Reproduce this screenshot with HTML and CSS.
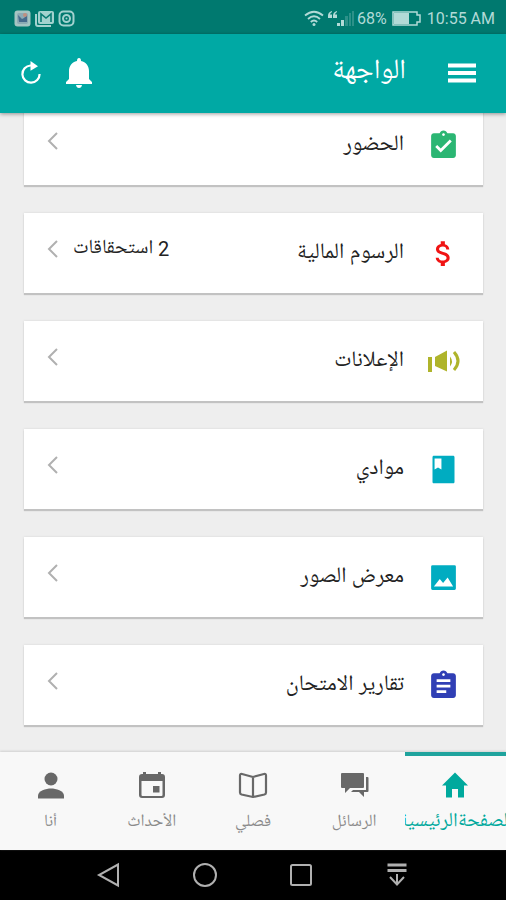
FILE: index.html
```html
<!DOCTYPE html>
<html lang="ar" dir="rtl">
<head>
<meta charset="utf-8">
<meta name="viewport" content="width=device-width, initial-scale=1">
<title>الواجهة</title>
<link rel="stylesheet" href="styles.css">
</head>
<body>
<div class="status" dir="ltr">
  <div class="status-group notifications">
    <svg width="17" height="17" viewBox="0 0 17 17"><rect x="0.5" y="0.5" width="16" height="16" rx="3" fill="#a5c5c3"/><rect x="3" y="3" width="11" height="11" rx="2" fill="#8cabb5"/><path d="M4 5l4 4 2-1 3-3v7H5z" fill="#466b8c"/><circle cx="11" cy="5" r="2" fill="#c08f80"/></svg>
    <svg width="19" height="17" viewBox="0 0 19 17"><path d="M1 4v10q0 2 2 2h13" fill="none" stroke="#a2d2cf" stroke-width="2"/><rect x="3" y="1" width="16" height="13" rx="2" fill="#a2d2cf"/><path d="M6 12V4l5 4 5-4v8" fill="none" stroke="#087b73" stroke-width="1.6"/></svg>
    <svg width="17" height="17" viewBox="0 0 17 17" fill="none" stroke="#a2d2cf" stroke-width="2"><rect x="1.5" y="1.5" width="14" height="14" rx="4"/><circle cx="8.500" cy="8.500" r="3.500"/><circle cx="8.500" cy="8.500" r="1" fill="#a2d2cf" stroke="none"/></svg>
  </div>
  <div class="status-group">
    <svg width="20" height="17" viewBox="0 0 20 17" fill="none" stroke="#b2dad7" stroke-width="1.800"><path d="M1 5.500Q10-2 19 5.500M4 9Q10 3.500 16 9M6.800 12Q10 9 13.200 12"/><circle cx="10" cy="14.500" r="1.500" fill="#b2dad7" stroke="none"/></svg>
    <svg class="signal" width="27" height="17" viewBox="0 0 27 17" fill="#b2dad7"><path d="M4 1Q0 2 0 5.500V8h4V4.500H2Q2 3 4 2zM9 1Q5 2 5 5.500V8h4V4.500H7Q7 3 9 2z"/><path d="M9 13h3v3H9zM13 10h3v6h-3z"/><path opacity=".25" d="M17 6h3v10h-3zM21 3h2v13h-2zM24 1h2v15h-2z"/></svg>
    <span>68%</span>
    <svg class="battery" width="30" height="15" viewBox="0 0 30 15"><path d="M1 1h24v3h3v7h-3v3H1z" fill="none" stroke="#b2dad7" stroke-width="1.500"/><path d="M2 2h15v11H2z" fill="#b2dad7"/></svg>
    <span>10:55 AM</span>
  </div>
</div>

<header class="appbar">
  <button class="icon-button" aria-label="القائمة"><svg width="28" height="20" viewBox="0 0 28 20" stroke="#fff" stroke-width="4"><path d="M0 2.500h28M0 10h28M0 17.500h28"/></svg></button>
  <h1>الواجهة</h1>
  <button class="icon-button" aria-label="التنبيهات"><svg width="26" height="32" viewBox="0 0 26 32" fill="#fff"><path d="M13 1q2 0 2 3c5 1 8 5 8 10v8l3 3v2H0v-2l3-3v-8C3 9 6 5 11 4q0-3 2-3zM10 28h6q-.5 3-3 3t-3-3z"/></svg></button>
  <button class="icon-button" aria-label="تحديث"><svg width="22" height="24" viewBox="0 0 22 24"><path d="M12.500 4.500H10.500A8.600 8.600 0 1 0 19.600 13" fill="none" stroke="#fff" stroke-width="2.200"/><path d="M10.500 0l7.500 5.200-7.500 4.500z" fill="#fff"/></svg></button>
</header>

<main>
  <nav class="cards" aria-label="الأقسام">
    <a class="card" href="#attendance">
      <svg class="card-icon" viewBox="0 0 24 24"><path fill="#2bb673" d="M19 3h-4.180C14.400 1.840 13.300 1 12 1s-2.400.84-2.820 2H5c-1.100 0-2 .9-2 2v14c0 1.100.9 2 2 2h14c1.100 0 2-.9 2-2V5c0-1.100-.9-2-2-2zm-7 0c.55 0 1 .45 1 1s-.45 1-1 1-1-.45-1-1 .45-1 1-1zm-2 14l-4-4 1.410-1.410L10 14.170l6.590-6.590L18 9l-8 8z"/></svg>
      <span class="title">الحضور</span>
      <span class="more"><svg class="chevron" viewBox="0 0 12 18"><path d="M10 1L2 9l8 8"/></svg></span>
    </a>
    <a class="card" href="#fees">
      <svg class="card-icon" viewBox="0 0 24 24"><path fill="#f01414" d="M11.800 10.900c-2.270-.59-3-1.200-3-2.150 0-1.090 1.010-1.850 2.700-1.850 1.780 0 2.440.85 2.500 2.100h2.210c-.07-1.720-1.120-3.300-3.210-3.810V3h-3v2.160c-1.940.42-3.500 1.680-3.500 3.610 0 2.310 1.910 3.460 4.700 4.130 2.500.6 3 1.480 3 2.410 0 .69-.49 1.790-2.700 1.790-2.060 0-2.870-.92-2.980-2.100h-2.200c.12 2.190 1.760 3.420 3.680 3.830V21h3v-2.150c1.950-.37 3.500-1.500 3.500-3.550 0-2.840-2.430-3.810-4.700-4.400z"/></svg>
      <span class="title">الرسوم المالية</span>
      <span class="more"><span class="note">2 استحقاقات</span><svg class="chevron" viewBox="0 0 12 18"><path d="M10 1L2 9l8 8"/></svg></span>
    </a>
    <a class="card" href="#announcements">
      <svg class="card-icon" viewBox="0 0 33 33" fill="#afb42b"><path d="M1 12h4v15H1zM8 12l12-6.500v21L8 21zM23 11.500q4 5 0 10z"/><path d="M27 7q8 9 0 18" fill="none" stroke="#afb42b" stroke-width="3"/></svg>
      <span class="title">الإعلانات</span>
      <span class="more"><svg class="chevron" viewBox="0 0 12 18"><path d="M10 1L2 9l8 8"/></svg></span>
    </a>
    <a class="card" href="#subjects">
      <svg class="card-icon" viewBox="0 0 24 24"><path fill="#00acc1" d="M19 2H5c-.6 0-1 .4-1 1v18c0 .6.400 1 1 1h14c.6 0 1-.4 1-1V3c0-.6-.4-1-1-1zM5.500 4h5v8L8 10.500 5.500 12z"/></svg>
      <span class="title">موادي</span>
      <span class="more"><svg class="chevron" viewBox="0 0 12 18"><path d="M10 1L2 9l8 8"/></svg></span>
    </a>
    <a class="card" href="#gallery">
      <svg class="card-icon" viewBox="0 0 24 24"><path fill="#00acc1" d="M4 3h16q1 0 1 1v16q0 1-1 1H4q-1 0-1-1V4q0-1 1-1zm1 15.500h14L15 12l-3.300 4-2.400-3z"/></svg>
      <span class="title">معرض الصور</span>
      <span class="more"><svg class="chevron" viewBox="0 0 12 18"><path d="M10 1L2 9l8 8"/></svg></span>
    </a>
    <a class="card" href="#reports">
      <svg class="card-icon" viewBox="0 0 24 24"><path fill="#303fb5" d="M19 3h-4.180C14.400 1.840 13.300 1 12 1s-2.400.84-2.820 2H5c-1.100 0-2 .9-2 2v14c0 1.100.9 2 2 2h14c1.100 0 2-.9 2-2V5c0-1.100-.9-2-2-2zm-7 0c.55 0 1 .45 1 1s-.45 1-1 1-1-.45-1-1 .45-1 1-1zm2 14.500H7v-2h7v2zm3-4H7v-2h10v2zm0-4H7v-2h10v2z"/></svg>
      <span class="title">تقارير الامتحان</span>
      <span class="more"><svg class="chevron" viewBox="0 0 12 18"><path d="M10 1L2 9l8 8"/></svg></span>
    </a>
  </nav>
</main>

<nav class="tabs" aria-label="التنقل">
  <a class="tab active" href="#home"><svg viewBox="0 0 34 34"><path fill="#00a99d" d="M17 4.500L4 17.500h4V29.500h6V21h6v8.500h6V17.500h4z"/></svg><span>الصفحةالرئيسية</span></a>
  <a class="tab" href="#messages"><svg viewBox="0 0 34 34" fill="#686868"><path d="M4 6q0-1 1-1h21q1 0 1 1v13q0 1-1 1H13l-5 5v-5H5q-1 0-1-1z"/><path d="M29 9h1.500q1 0 1 1v13q0 1-1 1H27v5l-5-5h-8l2-2h13z"/></svg><span>الرسائل</span></a>
  <a class="tab" href="#class"><svg viewBox="0 0 34 34" fill="none" stroke="#686868" stroke-width="2.200" stroke-linejoin="round"><path d="M17 9L28 6q2-.5 2 1.500v17q0 1.500-1.500 2L17 29 5.500 26.500Q4 26 4 24.500v-17Q4 5.500 6 6zM17 9V29"/></svg><span>فصلي</span></a>
  <a class="tab" href="#events"><svg viewBox="0 0 34 34" fill="#686868"><path fill-rule="evenodd" d="M8 4h3v2h12V4h3v2h1q3 0 3 3v18q0 3-3 3H7q-3 0-3-3V9q0-3 3-3h1zM6.500 13v14q0 1 1 1h19q1 0 1-1V13z"/><path d="M18 18h6.500v6.500H18z"/></svg><span>الأحداث</span></a>
  <a class="tab" href="#me"><svg viewBox="0 0 34 34" fill="#686868"><circle cx="17" cy="11" r="6.500"/><path d="M4 30.500v-3c0-4.500 8-7 13-7s13 2.500 13 7v3z"/></svg><span>أنا</span></a>
</nav>

<div class="system" dir="ltr">
  <button aria-label="رجوع"><svg viewBox="0 0 26 26"><path d="M22 2.500v21L3 13z"/></svg></button>
  <button aria-label="الشاشة الرئيسية"><svg viewBox="0 0 26 26"><circle cx="13" cy="13" r="11"/></svg></button>
  <button aria-label="التطبيقات الأخيرة"><svg viewBox="0 0 26 26"><rect x="3" y="3" width="20" height="20" rx="1.500"/></svg></button>
  <button aria-label="إخفاء الشريط"><svg viewBox="0 0 26 26"><path stroke-width="3" d="M3.500 3h19M3.500 8.500h19"/><path d="M13 12v10M6 15l7 7.500 7-7.500"/></svg></button>
</div>
</body>
</html>
```
FILE: styles.css
```css
* {
  box-sizing: border-box;
}

body {
  margin: 0;
  height: 100vh;
  display: flex;
  flex-direction: column;
  overflow: hidden;
  background: #eeeeee;
  color: #222;
  font-family: Roboto, "Noto Naskh Arabic UI", "Noto Naskh Arabic", "Noto Sans Arabic", "DejaVu Sans", sans-serif;
}

svg {
  display: block;
  flex: none;
}

a {
  color: inherit;
  text-decoration: none;
}

button {
  padding: 0;
  border: 0;
  background: none;
}

.status {
  flex: none;
  height: 34px;
  padding: 2px 11px 0 14px;
  display: flex;
  align-items: center;
  justify-content: space-between;
  background: #00796f;
  color: #b2dad7;
  font-size: 16px;
}

.status-group {
  display: flex;
  align-items: center;
  gap: 4px;
}

.signal {
  margin-right: -2px;
}

.battery {
  margin: 0 1px;
}

.appbar {
  flex: none;
  height: 79px;
  padding: 0 30px 2px 20px;
  display: flex;
  align-items: center;
  gap: 24px;
  background: #00a9a4;
  color: #fff;
  box-shadow: 0 1px 4px rgba(0, 0, 0, 0.4);
  z-index: 1;
}

.appbar h1 {
  flex: 1;
  margin: 0 18px;
  font-size: 28px;
  font-weight: 400;
  line-height: 32px;
}

main {
  flex: 1;
  min-height: 0;
  overflow: hidden;
}

.cards {
  margin-top: -8px;
  padding: 0 23px 0 24px;
  display: flex;
  flex-direction: column;
  gap: 28px;
}

.card {
  height: 80px;
  padding: 0 23px;
  display: flex;
  align-items: center;
  gap: 23px;
  background: #fff;
  box-shadow: 0 2px 1px #c2c2c2, 0 0 2px #d4d4d4;
}

.card-icon {
  width: 33px;
  height: 33px;
}

.title {
  flex: 1;
  padding-top: 2px;
  font-size: 22px;
  line-height: 28px;
}

.more {
  display: flex;
  align-items: center;
  gap: 14px;
  padding-bottom: 8px;
}

.note {
  font-size: 20px;
  line-height: 24px;
}

.chevron {
  width: 12px;
  height: 18px;
  fill: none;
  stroke: #b0b0b0;
  stroke-width: 2;
}

.tabs {
  flex: none;
  height: 98px;
  display: flex;
  background: #f8f8f8;
  box-shadow: 0 -1px 2px #d0d0d0;
  z-index: 1;
}

.tab {
  flex: 1 1 0;
  min-width: 0;
  padding-top: 12px;
  display: flex;
  flex-direction: column;
  align-items: center;
  gap: 8px;
  border-top: 4px solid transparent;
  overflow: hidden;
  color: #8a8a8a;
  font-size: 17px;
  line-height: 24px;
  white-space: nowrap;
}

.tab svg {
  width: 34px;
  height: 34px;
}

.active {
  border-color: #1fa39d;
  color: #00a99d;
  font-size: 20px;
}

.system {
  flex: none;
  height: 50px;
  display: flex;
  align-items: center;
  justify-content: center;
  gap: 70px;
  background: #000;
}

.system svg {
  width: 26px;
  height: 26px;
  fill: none;
  stroke: #b0b0b0;
  stroke-width: 2;
}
```
